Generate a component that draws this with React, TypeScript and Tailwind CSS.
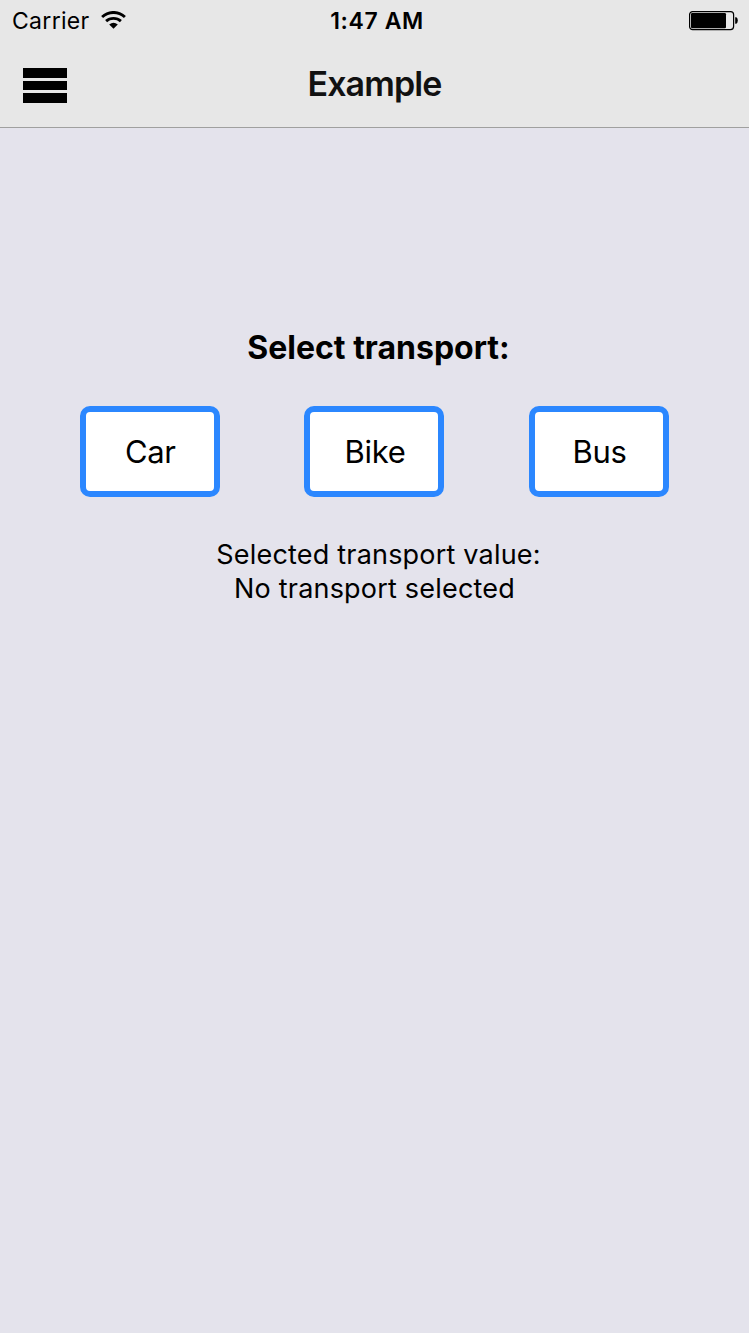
const transports = ['Car', 'Bike', 'Bus'];

function WifiIcon() {
  return (
    <svg width="25" height="18" viewBox="0 0 25 18" fill="none" stroke="#000" strokeWidth="2.9" className="mb-[2px] shrink-0">
      <path d="M1.1 6C7.6 -.1 17.4 -.1 23.9 6" />
      <path d="M5.1 10.2C9.3 6.4 15.7 6.4 19.9 10.2" />
      <path d="M12.5 17.7 8.2 13.6Q12.5 10 16.8 13.6Z" fill="#000" stroke="none" />
    </svg>
  );
}

function BatteryIcon() {
  return (
    <svg width="50" height="20" viewBox="0 0 50 20" className="shrink-0">
      <rect x="0.6" y="0.6" width="44" height="18" rx="3" fill="none" stroke="#000" strokeWidth="1.2" />
      <rect x="2" y="2" width="35" height="15.2" rx="1.2" fill="#000" />
      <path d="M46.2 6.3h1.2q1.4 1 1.4 3.2t-1.4 3.2h-1.2z" fill="#000" />
    </svg>
  );
}

export default function App() {
  return (
    <div className="flex h-[1333px] w-[749px] flex-col overflow-hidden bg-[#e4e3ec] font-['Inter',sans-serif] text-black">
      <header className="flex h-32 shrink-0 flex-col border-b border-[#a0a09f] bg-[#e7e7e7]">
        <div className="grid h-[42px] grid-cols-3 items-center pr-[10px] pl-3 text-[23px]">
          <div className="flex items-center gap-[11px]">
            <span className="tracking-[0.3px]">Carrier</span>
            <WifiIcon />
          </div>
          <span className="pl-[3px] text-center font-semibold tracking-[0.6px] whitespace-nowrap">1:47 AM</span>
          <div className="flex justify-end">
            <BatteryIcon />
          </div>
        </div>
        <div className="grid h-[85px] grid-cols-3 items-center px-[23px]">
          <button aria-label="Menu" className="mt-[2px] flex w-11 flex-col gap-[3px]">
            <span className="h-[9.5px] bg-black" />
            <span className="h-[9.5px] bg-black" />
            <span className="h-[9.5px] bg-black" />
          </button>
          <h1 className="pb-[2px] text-center text-[34px] leading-[40px] font-semibold tracking-[-0.9px] text-[#111]">Example</h1>
        </div>
      </header>
      <main className="flex flex-col items-center pt-[200px]">
        <h2 className="pl-2 text-[32px] leading-[40px] font-bold">Select transport:</h2>
        <div className="mt-[38px] grid w-[674px] grid-cols-3 justify-items-center">
          {transports.map((name) => (
            <button
              key={name}
              className="h-[91px] w-[140px] rounded-[10px] border-6 border-[#2b87ff] bg-white pt-[2px] pl-px text-[31px] tracking-[-0.3px]"
            >
              {name}
            </button>
          ))}
        </div>
        <p className="mt-[41px] text-center text-[27px] leading-[34px] tracking-[0.2px]">
          <span className="block pl-2">Selected transport value:</span>
          <span className="block">No transport selected</span>
        </p>
      </main>
    </div>
  );
}
